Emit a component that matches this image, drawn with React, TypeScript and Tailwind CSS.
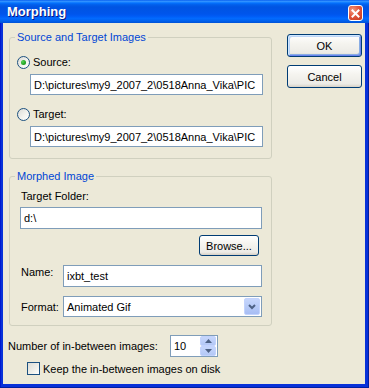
import React from "react";

function Radio({ checked }: { checked?: boolean }) {
  return (
    <span className="w-[13px] h-[13px] rounded-full border border-[#1c5180] bg-[linear-gradient(135deg,#dcdcd7_0%,#f4f4f0_60%,#ffffff_100%)] flex items-center justify-center shrink-0">
      {checked && (
        <span className="w-[5px] h-[5px] rounded-full bg-[radial-gradient(circle_at_35%_35%,#55d455_0%,#21a121_60%,#1a8a1a_100%)]" />
      )}
    </span>
  );
}

function Button({ label, def, className }: { label: string; def?: boolean; className?: string }) {
  return (
    <div
      className={
        "flex items-center justify-center border border-[#003c74] rounded-[3px] bg-[linear-gradient(to_bottom,#ffffff_0%,#f5f4ef_40%,#ecebe6_85%,#d6d0c5_100%)] text-[11px] text-black " +
        (def
          ? "shadow-[inset_1px_1px_0_#cee7ff,inset_-1px_-1px_0_#6982ee,inset_2px_2px_0_#bcd4f6,inset_-2px_-2px_0_#89ade4] "
          : "") +
        (className ?? "")
      }
    >
      {label}
    </div>
  );
}

function TextBox({ value, className }: { value: string; className?: string }) {
  return (
    <div
      className={
        "flex items-center bg-white border border-[#7f9db9] px-[3px] text-[11px] text-black whitespace-nowrap overflow-hidden " +
        (className ?? "")
      }
    >
      {value}
    </div>
  );
}

export default function App() {
  return (
    <div className="w-[369px] h-[388px] flex flex-col bg-[#0831d9] shadow-[inset_-1px_-1px_0_#001ea0,inset_1px_0_0_#0019cf] font-[Liberation_Sans,Arial,sans-serif] text-[11px] leading-[14px] text-black select-none">
      {/* Title bar */}
      <div className="h-[23px] shrink-0 flex items-start justify-between bg-[linear-gradient(to_bottom,#0058ee_0%,#3593ff_5%,#288eff_8%,#127dff_11%,#036ffc_14%,#0262ee_19%,#0057e5_27%,#0054e3_33%,#0055eb_60%,#005bf5_70%,#026afe_80%,#0062ef_90%,#0052d6_100%)]">
        <div className="mt-[4px] ml-[7px] text-[13px] leading-[16px] font-bold text-white [text-shadow:1px_1px_0_#0a1883]">
          Morphing
        </div>
        <div className="mt-[5px] mr-[6px] w-[15px] h-[16px] rounded-[3px] border border-white bg-[radial-gradient(circle_at_30%_30%,#f09a80_0%,#e2553c_45%,#c4391d_100%)] flex items-center justify-center">
          <svg width="9" height="9" viewBox="0 0 9 9">
            <path d="M1.5 1.5 L7.5 7.5 M7.5 1.5 L1.5 7.5" stroke="white" strokeWidth="2" strokeLinecap="square" />
          </svg>
        </div>
      </div>

      {/* Client area */}
      <div className="flex-1 ml-[3px] mr-[4px] mb-[4px] bg-[#ece9d8] flex">
        {/* Left column */}
        <div className="w-[270px] flex flex-col">
          {/* Group 1 */}
          <fieldset className="ml-[6px] mt-[7px] w-[263px] border border-[#d0d0bf] rounded-[3px] pb-[11px]">
            <legend className="ml-[5px] px-[2px] text-[#0046d5] leading-[14px]">Source and Target Images</legend>
            <div className="mt-[11px] h-[14px] ml-[7px] flex items-center gap-[3px]">
              <Radio checked />
              <span>Source:</span>
            </div>
            <TextBox
              className="mt-[5px] ml-[20px] w-[233px] h-[21px]"
              value="D:\pictures\my9_2007_2\0518Anna_Vika\PIC"
            />
            <div className="mt-[12px] h-[14px] ml-[7px] flex items-center gap-[3px]">
              <Radio />
              <span>Target:</span>
            </div>
            <TextBox
              className="mt-[5px] ml-[20px] w-[233px] h-[21px]"
              value="D:\pictures\my9_2007_2\0518Anna_Vika\PIC"
            />
          </fieldset>

          {/* Group 2 */}
          <fieldset className="ml-[6px] mt-[10px] w-[263px] border border-[#d0d0bf] rounded-[3px] pb-[8px]">
            <legend className="ml-[5px] px-[2px] text-[#0046d5] leading-[14px]">Morphed Image</legend>
            <div className="mt-[6px] ml-[11px] h-[14px]">Target Folder:</div>
            <TextBox className="mt-[4px] ml-[10px] w-[242px] h-[22px]" value="d:\" />
            <Button label="Browse..." className="mt-[6px] ml-[189px] w-[60px] h-[21px]" />
            <div className="mt-[9px] flex items-start">
              <div className="ml-[11px] w-[42px] h-[14px]">Name:</div>
              <TextBox className="w-[199px] h-[22px]" value="ixbt_test" />
            </div>
            <div className="mt-[9px] flex items-start">
              <div className="ml-[11px] w-[42px] h-[14px] mt-[4px]">Format:</div>
              <div className="w-[199px] h-[21px] bg-white border border-[#7f9db9] flex items-center justify-between pl-[3px] pr-[1px]">
                <span>Animated Gif</span>
                <div className="w-[16px] h-[17px] rounded-[2px] border border-[#c3d3fd] bg-[linear-gradient(to_bottom,#c6d6fc_0%,#b4c8f6_60%,#a7bdf4_100%)] flex items-center justify-center">
                  <svg width="8" height="6" viewBox="0 0 8 6">
                    <path d="M1 1 L4 4 L7 1" stroke="#4d6185" strokeWidth="2" fill="none" />
                  </svg>
                </div>
              </div>
            </div>
          </fieldset>

          {/* Number of in-between */}
          <div className="mt-[9px] flex items-center h-[22px]">
            <div className="ml-[5px] w-[162px]">Number of in-between images:</div>
            <div className="w-[48px] h-[22px] bg-white border border-[#7f9db9] flex items-center justify-between pl-[3px] pr-[1px]">
              <span>10</span>
              <div className="w-[16px] h-[20px] flex flex-col">
                <div className="h-[10px] rounded-[2px] border border-[#c3d3fd] bg-[linear-gradient(to_bottom,#c6d6fc_0%,#b4c8f6_100%)] flex items-center justify-center">
                  <svg width="7" height="4" viewBox="0 0 7 4">
                    <path d="M0 4 L3.5 0 L7 4 Z" fill="#4d6185" />
                  </svg>
                </div>
                <div className="h-[10px] rounded-[2px] border border-[#c3d3fd] bg-[linear-gradient(to_bottom,#c6d6fc_0%,#b4c8f6_100%)] flex items-center justify-center">
                  <svg width="7" height="4" viewBox="0 0 7 4">
                    <path d="M0 0 L3.5 4 L7 0 Z" fill="#4d6185" />
                  </svg>
                </div>
              </div>
            </div>
          </div>

          {/* Checkbox */}
          <div className="mt-[5px] ml-[24px] flex items-center gap-[3px] h-[13px]">
            <span className="w-[13px] h-[13px] border border-[#1c5180] bg-[linear-gradient(135deg,#dcdcd7_0%,#f0f0ea_60%,#ffffff_100%)] shrink-0" />
            <span>Keep the in-between images on disk</span>
          </div>
        </div>

        {/* Right column */}
        <div className="ml-[14px] flex flex-col">
          <Button label="OK" def className="mt-[11px] w-[75px] h-[23px]" />
          <Button label="Cancel" className="mt-[8px] w-[75px] h-[23px]" />
        </div>
      </div>
    </div>
  );
}
